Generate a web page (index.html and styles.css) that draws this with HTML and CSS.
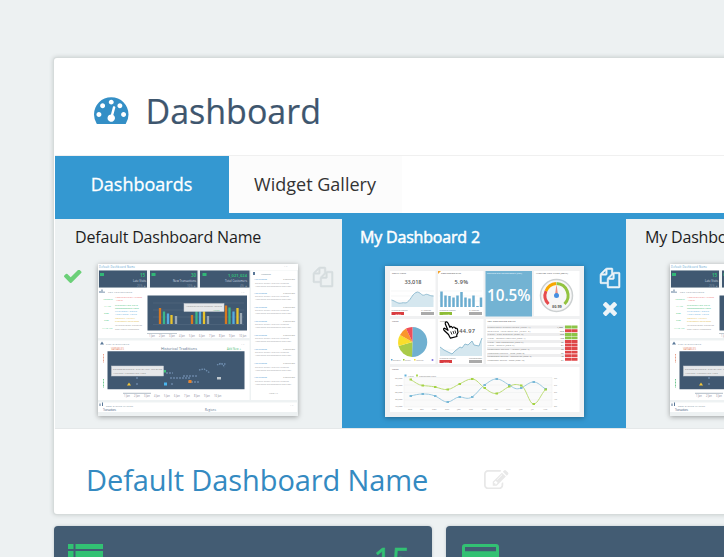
FILE: index.html
```html
<!DOCTYPE html>
<html lang="en">
<head>
<meta charset="utf-8">
<title>Dashboard</title>
<link rel="stylesheet" href="styles.css">
</head>
<body>
<main class="page">
  <section class="panel">
    <header class="panel-header">
      <svg class="gauge-icon" viewBox="0 256 1792 1408"><path d="M384 1152q0-53-37.500-90.500t-90.500-37.500-90.500 37.500-37.500 90.500 37.500 90.500 90.500 37.500 90.500-37.500 37.500-90.500zm192-448q0-53-37.500-90.500t-90.500-37.500-90.500 37.500-37.500 90.500 37.500 90.500 90.500 37.500 90.500-37.500 37.500-90.500zm428 481l101-382q6-26-7.500-48.500t-38.500-29.500-48 6.500-30 39.500l-101 382q-60 5-107 43.500t-63 98.500q-20 77 20 146t117 89 146-20 89-117q16-60-6-117t-72-91zm660-33q0-53-37.500-90.500t-90.500-37.500-90.500 37.500-37.500 90.500 37.500 90.500 90.500 37.500 90.500-37.500 37.500-90.500zm-640-640q0-53-37.500-90.500t-90.500-37.500-90.500 37.500-37.500 90.500 37.500 90.500 90.500 37.500 90.500-37.500 37.500-90.500zm448 192q0-53-37.500-90.500t-90.500-37.500-90.500 37.500-37.500 90.500 37.500 90.500 90.500 37.500 90.500-37.500 37.500-90.500zm320 448q0 261-141 483-19 29-54 29h-1402q-35 0-54-29-141-221-141-483 0-182 71-348t191-286 286-191 348-71 348 71 286 191 191 286 71 348z"/></svg>
      <h1>Dashboard</h1>
    </header>
    <nav class="tabs"><a class="tab active">Dashboards</a><a class="tab">Widget Gallery</a></nav>
    <div class="strip">
      <article class="board">
        <h3>Default Dashboard Name</h3>
        <div class="preview">
          <div class="status"><svg class="check" viewBox="121 373 1550 1149"><path d="M1671 566q0 40-28 68l-724 724-136 136q-28 28-68 28t-68-28l-136-136-362-362q-28-28-28-68t28-68l136-136q28-28 68-28t68 28l294 295 656-657q28-28 68-28t68 28l136 136q28 28 28 68z"/></svg></div>
          <svg class="thumb" viewBox="98 264 200 152">
            <g id="operations">
              <rect x="98" y="264" width="200" height="152" fill="#eef2f3"/>
              <path fill="#fff" d="M98 264h200v6H98zM98 288h151.500v50H98zM98 340.500h151.500v59.500H98zM251 270.500h46V400h-46zM98 402.500h199V412H98z"/>
              <text x="99" y="267.500" font-size="2.600" fill="#5d9fcf" textLength="36">Default Dashboard Name</text>
              <path fill="#405871" d="M99 270.500h48v17H99zM150 270.500h47.500v17H150zM200 270.500h49.500v17H200zM147.500 295.500h99.500v35h-99.500zM107.500 351.200h137v38h-137z"/>
              <g fill="#32b877">
                <path d="M100 273h4v3h-4zM151.500 273h4v3h-4zM202.500 273h4v3h-4z"/>
                <text x="140" y="276.500" font-size="4.500" font-weight="700">15</text>
                <text x="191" y="276.500" font-size="4.500" font-weight="700">30</text>
                <text x="228" y="276.500" font-size="4" font-weight="700" textLength="19">1,021,024</text>
              </g>
              <g fill="#d7dfe6" font-size="2.800">
                <text x="133" y="281.500" textLength="13">Late Visits</text><text x="173" y="281.500" textLength="23">New Transactions</text><text x="225" y="281.500" textLength="22">Total Customers</text>
                <text x="137" y="286.500" fill="#8596a6">25% ▲</text><text x="187" y="286.500" fill="#8596a6">10% ▲</text><text x="240" y="286.500" fill="#8596a6">4% ▲</text>
              </g>
              <path fill="#5a7898" d="M99.500 293v-2h1v2zM101.500 293v-3.500h1v3.500zM103.500 293v-1.500h1v1.500zM100 344.500l2-3 2 3zM99.500 406v-2.500h1v2.500zM102 406v-3.500h1v3.500zM253 275v-3h2v3z"/>
              <g font-size="2.400" fill="#8393a3">
                <text x="108" y="292.500" textLength="24">TOP PERFORMERS</text><text x="106" y="344.500" textLength="23">RISK EXEMPTIONS</text><text x="106" y="406.500" textLength="27">BEST EVENTS MARKET</text><text x="261" y="274.500" textLength="10">Messages</text>
              </g>
              <g font-size="2.400" fill="#3bbf7c"><text x="103" y="299.500">12:09PM</text><text x="104" y="306.500">11 AM</text><text x="104" y="313.500">3:00</text><text x="104" y="320.500">9:30</text><text x="102" y="328.500">11:45 AM</text></g>
              <g font-size="2.500">
                <text x="115" y="297.800" fill="#ef7474" textLength="27">Administrator Access</text><text x="116" y="300.800" fill="#ef7474">Alerts</text>
                <text x="115" y="305.500" fill="#43bd7c" textLength="23">Transaction Rate</text><text x="115" y="308.500" fill="#43bd7c" textLength="24">Recommended Value</text>
                <text x="115" y="312.300" fill="#68afe0" textLength="22">Customer Goals</text><text x="115" y="315.300" fill="#68afe0" textLength="22">Additional Value</text>
                <text x="115" y="318.500" fill="#e2bb45" textLength="20">Monthly Activity</text><text x="115" y="321.500" fill="#e2bb45" textLength="24">Customer Relations</text>
                <text x="115" y="326" fill="#999" textLength="27">International Records</text><text x="115" y="329.500" fill="#999" textLength="24">and More Messages</text>
              </g>
              <path stroke="#60758b" stroke-width=".4" d="M153 303h91M153 310h91M153 317h91M153 324.500h91"/>
              <g stroke-width="2.300">
                <path stroke="#d77920" d="M160 308v16M192 315v9M226 305.500v18.500"/><path stroke="#3bb78a" d="M164 311.500V324M196.500 311v13M229.500 307.500V324"/><path stroke="#56abe0" d="M168 313.500V324M200 309v15M233.500 311.500V324"/><path stroke="#e8c42d" d="M171.500 315v9M204 308v16M237.500 308v16"/><path stroke="#9aa8b4" d="M176 316v8M208 316v8M241 313v11"/>
              </g>
              <rect x="184" y="303.500" width="40" height="8" fill="#e6e8ea" stroke="#c6ccd2" stroke-width=".5"/>
              <text x="186" y="307" font-size="2.400" fill="#888" textLength="36">Administrative account details</text><text x="213" y="310.500" font-size="2.400" fill="#58b77e">Active</text>
              <path d="M147 333.500h30" stroke="#a8b4bf" stroke-width=".7"/>
              <g font-size="2.600" fill="#889"><text x="149" y="336.800">1 Jan</text><text x="159" y="336.800">2 Jan</text><text x="169" y="336.800">3 Jan</text><text x="179" y="336.800">4 Jan</text><text x="189" y="336.800">5 Jan</text><text x="199" y="336.800">6 Jan</text><text x="209" y="336.800">7 Jan</text><text x="219" y="336.800">8 Jan</text><text x="229" y="336.800">9 Jan</text><text x="239" y="336.800">10 Jan</text><text x="124" y="397.300">1 Jan</text><text x="134" y="397.300">2 Jan</text><text x="144" y="397.300">3 Jan</text><text x="154" y="397.300">4 Jan</text><text x="164" y="397.300">5 Jan</text><text x="174" y="397.300">6 Jan</text><text x="184" y="397.300">7 Jan</text><text x="194" y="397.300">8 Jan</text><text x="204" y="397.300">9 Jan</text><text x="214" y="397.300">10 Jan</text></g>
              <text x="111" y="349.700" font-size="2.600" fill="#e7896c" textLength="13">VARIABLES</text><text x="161" y="350" font-size="3.800" fill="#536b88" textLength="36">Historical Traditions</text><text x="227" y="349.700" font-size="2.600" fill="#53bd7c" textLength="14">Add New +</text>
              <path d="M103.500 354v9" stroke="#e9a18b" stroke-dasharray="1 .5"/><path d="M103.500 379v9" stroke="#72c993" stroke-dasharray="1 .5"/>
              <path stroke="#7895b8" stroke-width="2" stroke-dasharray="2 1" opacity=".55" d="M166 373h7M170 378h20M183 376h14M188 382h11M136 378h3M136 384h3M171 384h3"/>
              <path fill="none" stroke="#82a5cb" stroke-width="1.300" stroke-dasharray="1.500 1" opacity=".7" d="M199 370l5-1 6 4M217 365l4-2 4 4M219 364h7"/>
              <path fill="#e88329" d="M188.500 380h3v3h-3z"/><path fill="#4ab5ed" d="M164 382.500h3v3h-3z"/><path fill="#f3c739" d="M129 382.500l2 3h-4z"/><path fill="#41c37b" d="M163.500 370h2.500v2.500h-2.500z"/><path fill="#bfc7cd" d="M217 377h4v2.500h-4z"/>
              <rect x="111.500" y="366" width="52" height="10" fill="#e6e8ea" stroke="#c6ccd2" stroke-width=".5"/><text x="113" y="369.500" font-size="2.500" fill="#777" textLength="49">Recommended historical records</text><text x="113" y="373.500" font-size="2.500" fill="#888" textLength="33">Average transaction time</text>
              <path d="M123 393.300h28" stroke="#8e9eaf" stroke-width=".7"/>
              <g id="messages" font-size="2.400"><text x="254" y="280" fill="#5ba3d5" textLength="13">Ann Thomas</text><text x="283" y="280" fill="#999" textLength="12">2 hours ago</text><g fill="#a2a5a8"><text x="255" y="283.500" textLength="34">Default order feature records</text><text x="255" y="286.500" textLength="36">Additional performance and goal</text></g></g>
              <use href="#messages" y="13.500"/><use href="#messages" y="27.500"/><use href="#messages" y="41.500"/><use href="#messages" y="55.500"/><use href="#messages" y="69.500"/><use href="#messages" y="84"/><use href="#messages" y="98"/>
              <text x="269" y="393.500" font-size="2.500" fill="#999">View All</text>
              <g font-size="2.800" fill="#536b88"><text x="103" y="411" textLength="13">Transactions</text><text x="205" y="411" textLength="11">Regions</text></g>
              <g fill="#a4adb5" font-size="2.500"><text x="284" y="267">+ ×</text><text x="241" y="292.500">+ ×</text><text x="241" y="344.500">+ ×</text><text x="290" y="406">+ ×</text></g>
              <path fill="#edf1f2" d="M98 412h200v4H98z"/>
            </g>
          </svg>
          <div class="actions"><svg class="copy" viewBox="0 0 1792 1792"><path id="files" d="M1696 384q40 0 68 28t28 68v1216q0 40-28 68t-68 28h-960q-40 0-68-28t-28-68v-288h-544q-40 0-68-28t-28-68v-672q0-40 20-88t48-76l408-408q28-28 76-48t88-20h416q40 0 68 28t28 68v328q68-40 128-40h416zm-544 213l-299 299h299v-299zm-640-384l-299 299h299v-299zm196 647l316-316v-416h-384v416q0 40-28 68t-68 28h-416v640h512v-256q0-40 20-88t48-76zm956 804v-1152h-384v416q0 40-28 68t-68 28h-416v640h896z"/></svg></div>
        </div>
      </article>
      <article class="board selected">
        <h3>My Dashboard 2</h3>
        <div class="preview">
          <div class="status"></div>
          <svg class="thumb" viewBox="385 266 199 151">
            <rect x="385" y="266" width="199" height="151" fill="#f0f1f2"/>
            <path fill="#fff" d="M390 271h45.500v45H390zM438 271h45.500v45H438zM534 271h45.500v45H534zM390 319h45.500v45H390zM438 319h45.500v45H438zM486 319h93.500v45H486zM390 367h189.500v45H390z"/>
            <rect x="485.500" y="271" width="46.500" height="45.500" fill="#73b3d3"/>
            <g font-size="2.200" font-weight="600" fill="#666"><text x="392" y="274.300" textLength="14">TOTAL VISITS</text><text x="441" y="274.300" textLength="20">CONVERSION RATE</text><text x="487" y="274.300" fill="#e4f5ff" textLength="35">RETURN ON INVESTMENT (ROI)</text><text x="536" y="274.300" textLength="32">AVERAGE VISIT VALUE (GOAL)</text><text x="392" y="322.300">VISITS</text><text x="440" y="322.300">VALUE</text><text x="487.500" y="322.300" textLength="28">TOP CONVERTING GOALS</text><text x="392" y="370.300">VISITS</text></g>
            <g font-size="5.600" font-weight="600" fill="#555"><text x="404.500" y="284.300" textLength="17">33,018</text><text x="454.500" y="284.300" textLength="13.500">5.9%</text><text x="452" y="332.500" textLength="23">$144.97</text></g>
            <path fill="#f6a329" d="M438 271h3l-3 3z"/>
            <g stroke="#f0f1f1" stroke-width=".6"><path d="M391 291h43M391 296h43M391 301h43M439 291h43M439 296h43M439 301h43M439 350h43"/></g>
            <path fill="#d5e7ef" d="M391.500 307v-7c4 1 6 4 10 3 3-1 4 1 6-1 4-3 5-9 10-10 4 1 4 4 7 3 3-2 4 1 9 1v11z"/>
            <path fill="none" stroke="#91bdd2" d="M391.500 300c4 1 6 4 10 3 3-1 4 1 6-1 4-3 5-9 10-10 4 1 4 4 7 3 3-2 4 1 9 1"/>
            <path stroke="#6badd0" stroke-width="2.500" d="M441.500 307v-15.500M445.500 307v-11.500M449.500 307v-11M453.500 307v-9.500M457.500 307v-11.500M461.500 307v-15M465.500 307v-9.500M469.500 307v-8.500M473.500 307v-11.500M477.500 307v-1M481 307v-9.500"/>
            <g font-size="2.200" fill="#777"><text x="391.500" y="311">Previous Month</text><text x="421" y="311">% Change</text><text x="439.500" y="311">Previous Month</text><text x="469" y="311">% Change</text><text x="439.500" y="359">Previous Month</text><text x="469" y="359" textLength="13">Previous Goal</text></g>
            <path fill="#d93d40" d="M391.500 312H404v3h-12.500zM439.500 360H452v3h-12.500z"/><path fill="#8dbc35" d="M439.500 312H452v3h-12.500z"/><path fill="#aaa" d="M421 312h13v3h-13zM469 312h13v3h-13zM469 360h13v3h-13z"/>
            <g font-size="2.400" fill="#fff"><text x="395" y="314.500">-8.2%</text><text x="443" y="314.500">+4.1%</text><text x="443" y="362.500">-9.6%</text></g>
            <text x="487" y="300.800" font-size="16" font-weight="600" fill="#fff" textLength="43.500" lengthAdjust="spacingAndGlyphs">10.5%</text>
            <circle cx="556.500" cy="295.500" r="16" fill="#f7f7f7" stroke="#ccd0d1" stroke-width="1.500"/>
            <g fill="none" stroke-width="3"><path stroke="#e64b4d" d="M548.500 304a11.800 11.800 0 0 1-2.500-13"/><path stroke="#f7a600" d="M546 291a12 12 0 0 1 10-7.500"/><path stroke="#92c340" d="M556.500 283.500a12 12 0 0 1 8 20.500"/></g>
            <path d="M555 295l1.500-11 1.500 11z" fill="#ee8f7f"/><circle cx="556.500" cy="295.500" r="2.500" fill="#468fe1"/><text x="552" y="307.500" font-size="3.800" font-weight="700" fill="#555">$0.99</text>
            <g><path fill="#70b0d0" d="M412.500 342v-15a15 15 0 1 1-.5 30z"/><path fill="#aacb48" d="M412.500 342l-.5 15a15 15 0 0 1-13.500-11z"/><path fill="#fade2c" d="M412.500 342l-14 4a15 15 0 0 1 1.500-11z"/><path fill="#fa962d" d="M412.500 342l-12.500-7a15 15 0 0 1 6-6.500z"/><path fill="#ef4e59" d="M412.500 342l-6.500-13.500a15 15 0 0 1 6.500-1.500z"/></g>
            <g font-size="2.200" fill="#888"><text x="393" y="361">organic</text><text x="405" y="361">direct</text><text x="416" y="361">referral</text></g><path fill="#62a8d3" d="M391 359h1.500v1.500H391z"/><path fill="#9bcb36" d="M403 359h1.500v1.500H403z"/><path fill="#f7dd2d" d="M414 359h1.500v1.500H414z"/><circle cx="432.500" cy="360" r="1" fill="#8175df"/>
            <path fill="#d5e7ef" d="M440 356v-9l4 3 8 4 3-3 5-4 2 1 3-4 3 1 4-4 2 4 5 1 3-6v16z"/>
            <path fill="none" stroke="#91bdd2" d="M440 347l4 3 8 4 3-3 5-4 2 1 3-4 3 1 4-4 2 4 5 1 3-8"/>
            <path fill="#eeeeef" d="M487 325.500h78v3h-78zM487 333h78v3h-78zM487 340h78v3h-78zM487 347h78v3h-78zM487 354h78v3h-78z"/>
            <g font-size="2.300" fill="#777"><text x="487.500" y="328" textLength="43">Newsletter subscription (Goal 1)</text><text x="487.500" y="331.700" textLength="43">Request information (Goal 2)</text><text x="487.500" y="335.300" textLength="36">Visits - add product (Goal 3)</text><text x="487.500" y="339" textLength="38">Visits - Budget required (Goal 4)</text><text x="487.500" y="342.700" textLength="36">Visits - add comments (Goal 5)</text><text x="487.500" y="346.300" textLength="27">Visits - others (Goal 6)</text><text x="487.500" y="350" textLength="42">Newsletter service - Agency (Goal 7)</text><text x="487.500" y="353.700" textLength="37">Newsletter service - auto (Goal 8)</text><text x="487.500" y="357.300" textLength="44">Newsletter service - enterprise (Goal 9)</text><text x="487.500" y="361" textLength="37">Newsletter service - team (Goal 10)</text></g>
            <path fill="#8cc448" d="M565 325.500h12.500v3H565zM565 333h12.500v3H565zM565 336.500h12.500v2.700H565z"/><path fill="#df4648" d="M565 329.200h12.500v3H565zM565 340h12.500v2.900H565zM565 343.500h12.500v2.900H565zM565 347.100h12.500v2.900H565zM565 350.700h12.500v2.900H565zM565 354.300h12.500v2.900H565zM565 357.900h12.500v2.900H565z"/>
            <path d="M571.300 325v36" stroke="#fff" stroke-width=".6" opacity=".6"/>
            <g font-size="2.300" fill="#555"><text x="557" y="328">1,080</text><text x="560" y="331.700">660</text><text x="560" y="335.300">500</text><text x="560" y="339">420</text><text x="561" y="342.700">96</text><text x="561" y="346.300">84</text><text x="561" y="350">72</text><text x="561" y="353.700">65</text><text x="561" y="357.300">48</text><text x="561" y="361">34</text></g>
            <path fill="#fafafa" stroke="#eceeee" stroke-width=".5" d="M404 377.500h148V407H404zM404 385h148M404 392.500h148M404 400h148"/>
            <g font-size="2.400" fill="#888"><text x="395" y="378.500">50,000</text><text x="395" y="386">40,000</text><text x="395" y="393">30,000</text><text x="395" y="400">20,000</text><text x="395" y="407">10,000</text><text x="554" y="378.500">7%</text><text x="554" y="386">6%</text><text x="554" y="393">5%</text><text x="554" y="400">4%</text><text x="554" y="407">3%</text><text x="408" y="376.500">Visits</text><text x="419" y="376.500" textLength="17">Conversion Rate</text><text x="408" y="410">Sep</text><text x="420" y="410">Oct</text><text x="432" y="410">Nov</text><text x="445" y="410">Dec</text><text x="457" y="410">Jan</text><text x="469" y="410">Feb</text><text x="482" y="410">Mar</text><text x="494" y="410">Apr</text><text x="506" y="410">May</text><text x="519" y="410">Jun</text><text x="531" y="410">Jul</text><text x="543" y="410">Aug</text></g>
            <path fill="#62b1da" d="M404.500 374.500h2v2h-2z"/><path fill="#add957" d="M416 374.500h2v2h-2z"/>
            <path fill="none" stroke="#9bcae1" d="M410.500 396C415 395 418 394 422.500 394S430 394 435 396S443 402 447.500 402S455 397 459.500 397S467 400 472 397S480 388 484.500 385S492 379 496.500 379S504 382 509 385S516 390 521 388S529 382 533.500 382S541 386 545.500 389"/>
            <path fill="none" stroke="#bedd78" d="M410.500 379.500C415 382 418 385 422.500 385.500S430 386 435 387S443 390 447.500 389.500S455 386 459.500 384S467 379 472 379S480 385 484.500 388S492 394 496.500 393.500S504 389 509 386.500S516 384 521 385.500S529 404 533.500 404S541 394 545.500 389.500"/>
            <g fill="#7ab9d7"><path id="visit-dot" d="M409.500 395h2.500v2h-2.500z"/><use href="#visit-dot" x="12" y="-2"/><use href="#visit-dot" x="24.500"/><use href="#visit-dot" x="37" y="6"/><use href="#visit-dot" x="49" y="1"/><use href="#visit-dot" x="61.500" y="1"/><use href="#visit-dot" x="74" y="-11"/><use href="#visit-dot" x="86" y="-17"/><use href="#visit-dot" x="98.500" y="-11"/><use href="#visit-dot" x="110.500" y="-8"/><use href="#visit-dot" x="123" y="-14"/><use href="#visit-dot" x="135" y="-7"/></g>
            <g fill="#a4d344"><path id="rate-dot" d="M409.500 378.500h2.500v2h-2.500z"/><use href="#rate-dot" x="12" y="6"/><use href="#rate-dot" x="24.500" y="7.500"/><use href="#rate-dot" x="37" y="10"/><use href="#rate-dot" x="49" y="4.500"/><use href="#rate-dot" x="61.500" y="-.5"/><use href="#rate-dot" x="74" y="8.500"/><use href="#rate-dot" x="86" y="14"/><use href="#rate-dot" x="98.500" y="7"/><use href="#rate-dot" x="110.500" y="6"/><use href="#rate-dot" x="123" y="24.500"/><use href="#rate-dot" x="135" y="10"/></g>
            <g transform="translate(443 321)"><path fill="#fff" stroke="#000" stroke-width="1.200" stroke-linejoin="round" d="M6.500 15.500l-1-2-4.500-4.300Q0 7.500 1.500 7.200L5 9.300 2.300 3Q2 .8 3.600.8 4.500.8 5 2l2 4.500Q7 5 8.500 5.500L9.500 7Q10.500 5.300 12 6.500l.5 1Q14 6.700 14.500 8.500l.5 3-1.300 2.500.2 1.500-6.400 1.700z"/><path stroke="#000" stroke-width=".8" d="M7.700 10.500l1.200 3M10 10l1 3M12 9.500l.8 3"/></g>
          </svg>
          <div class="actions"><svg class="copy" viewBox="0 0 1792 1792"><use href="#files"/></svg><svg class="remove" viewBox="302 366 1188 1188"><path d="M1490 1322q0 40-28 68l-136 136q-28 28-68 28t-68-28l-294-294-294 294q-28 28-68 28t-68-28l-136-136q-28-28-28-68t28-68l294-294-294-294q-28-28-28-68t28-68l136-136q28-28 68-28t68 28l294 294 294-294q28-28 68-28t68 28l136 136q28 28 28 68t-28 68l-294 294 294 294q28 28 28 68z"/></svg></div>
        </div>
      </article>
      <article class="board last">
        <h3>My Dashboard 3</h3>
        <div class="preview"><div class="status"></div><svg class="thumb" viewBox="98 264 200 152"><use href="#operations"/></svg></div>
      </article>
    </div>
    <div class="current"><h2>Default Dashboard Name</h2><svg class="edit" viewBox="0 128 1792 1408"><path d="M888 1184l116-116-152-152-116 116v56h96v96h56zm440-720q-16-16-33 1l-350 350q-17 17-1 33t33-1l350-350q17-17 1-33zm80 594v190q0 119-84.500 203.500t-203.500 84.500h-832q-119 0-203.500-84.500t-84.500-203.500v-832q0-119 84.500-203.500t203.500-84.500h832q63 0 117 25 15 7 18 23 3 17-9 29l-49 49q-14 14-32 8-23-6-45-6h-832q-66 0-113 47t-47 113v832q0 66 47 113t113 47h832q66 0 113-47t47-113v-126q0-13 9-22l64-64q15-15 35-7t20 29zm-96-738l288 288-672 672h-288v-288zm444 132l-92 92-288-288 92-92q28-28 68-28t68 28l152 152q28 28 28 68t-28 68z"/></svg></div>
  </section>
  <section class="stats">
    <div class="stat"><svg width="35" height="30" viewBox="0 0 35 30"><path d="M0 0h5.500v5H0zM7.500 0H35v5H7.500zM0 7h5.500v6H0zM7.500 7H35v6H7.500zM0 15h5.500v6H0zM7.500 15H35v6H7.500z"/></svg><strong>15</strong></div>
    <div class="stat"><svg width="37" height="30" viewBox="0 0 37 30"><path fill-rule="evenodd" d="M3 0h31q3 0 3 3v23q0 3-3 3H3q-3 0-3-3V3q0-3 3-3zm0 3v4.200h31V3z"/></svg></div>
  </section>
</main>
</body>
</html>
```
FILE: styles.css
```css
* { box-sizing: border-box; }
body { margin: 0; overflow: hidden; background: #edf1f2; font-family: "Open Sans", sans-serif; color: #222; }
h1, h2, h3 { margin: 0; font-weight: 400; }
svg { display: block; flex: none; }
.page { height: 557px; padding: 58px 0 0 54px; overflow: hidden; }
.panel { width: 1000px; height: 456px; padding-left: 1px; background: #fff; border-radius: 3px; box-shadow: 0 0 0 1px #d6dbdb, 0 0 4px 1px #c6cbcb; }
.panel-header { height: 98px; display: flex; align-items: center; padding: 8px 0 0 39px; border-bottom: 1px solid #f0f0f0; }
.gauge-icon { width: 34.500px; height: 27.500px; fill: #348fc6; }
h1 { margin-left: 17px; font-size: 34px; line-height: 48px; color: #3e566e; -webkit-text-stroke: .2px #3e566e; }
.tabs { height: 63px; display: flex; border-bottom: 6px solid #3498d1; }
.tab { width: 173px; padding-right: 1px; text-align: center; font-size: 18px; line-height: 57px; color: #333; background: #fcfcfc; }
.tab.active { width: 174px; color: #fff; background: #3498d1; -webkit-text-stroke: .3px #fff; }
.strip { height: 210px; display: flex; background: #edf1f2; border-bottom: 1px solid #e5e8e9; }
.board { width: 287px; flex: none; }
.board h3 { height: 45px; padding: 6px 0 0 20px; font-size: 16px; line-height: 24px; letter-spacing: -.18px; color: #1d1d1d; }
.preview { display: flex; align-items: flex-start; }
.status { width: 43px; flex: none; padding: 6px 0 0 9px; }
.check { width: 17.500px; height: 13px; fill: #6bd078; }
.thumb { width: 200px; height: 152px; box-shadow: 0 1px 5px rgba(0, 0, 0, .35); }
.actions { padding: 3px 0 0 15px; display: flex; flex-direction: column; align-items: center; gap: 14px; }
.copy { width: 20px; height: 20px; overflow: visible; fill: #d6dddf; stroke: #d6dddf; stroke-width: 50; }
.remove { width: 14px; height: 14px; fill: #edf4f8; }
.board.selected { width: 284px; height: 209px; background: #3498d1; }
.selected h3 { height: 47px; padding-left: 18px; color: #fff; -webkit-text-stroke: .5px #fff; }
.selected .thumb { width: 199px; height: 151px; }
.selected .actions { padding: 2px 0 0 16px; }
.selected .copy { fill: #edf4f8; stroke: #edf4f8; }
.last h3 { padding-left: 19px; }
.last .status { width: 44px; }
.current { display: flex; align-items: center; height: 85px; padding: 16px 0 0 31px; }
h2 { width: 398px; font-size: 29px; line-height: 40px; letter-spacing: -.1px; color: #348ac1; }
.edit { width: 24.500px; height: 19.250px; fill: #e8e8e8; }
.stats { display: flex; gap: 14px; width: 1000px; margin-top: 12px; }
.stat { width: 378px; height: 100px; flex: none; display: flex; justify-content: space-between; align-items: flex-start; padding: 18px 22px 0 14px; color: #32c173; background: #435c73; border-radius: 4px; box-shadow: 0 0 3px #bfc7cb; }
.stat + .stat { padding-left: 15.500px; }
.stat svg { fill: #32c173; }
.stat strong { font-size: 32px; line-height: 44px; font-weight: 400; margin-top: -6px; -webkit-text-stroke: .4px #32c173; }
```
